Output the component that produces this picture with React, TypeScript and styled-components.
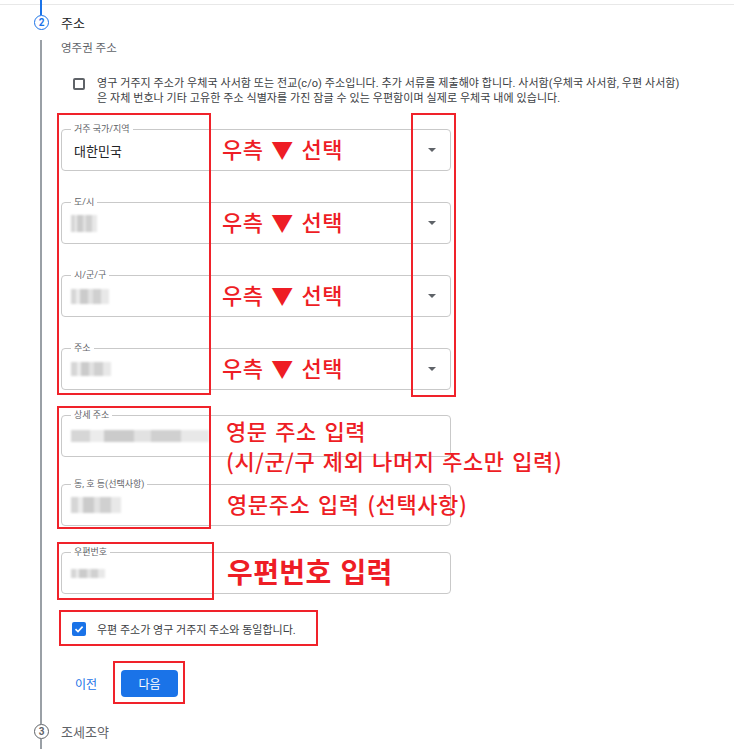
import React, { FC } from 'react';
import styled, { createGlobalStyle } from 'styled-components';

const GlobalStyle = createGlobalStyle`
    body {
        margin: 0;
        background: #fff;
        font-family: Roboto, "Noto Sans CJK KR", sans-serif;
        color: #202124;
    }
`;

const Page = styled.div`
    position: relative;
    width: 734px;
    height: 749px;
    overflow: hidden;
    background: linear-gradient(#e8e8e8, #e8e8e8) 0 4px / 100% 1px no-repeat, #fff;
`;

const Connector = styled.div`
    margin-left: 40px;
    height: 15px;
    border-left: 2px solid #1a73e8;
`;

const StepHead = styled.div`
    display: flex;
    align-items: center;
    height: 15px;
`;

const Circle = styled.div<{ active?: boolean }>`
    box-sizing: border-box;
    margin-left: 34px;
    width: 15px;
    height: 15px;
    border-radius: 50%;
    border: 1.5px solid ${props => props.active ? "#1a73e8" : "#5f6368"};
    color: ${props => props.active ? "#1a73e8" : "#5f6368"};
    font-size: 10px;
    font-weight: 700;
    display: flex;
    align-items: center;
    justify-content: center;
`;

const StepTitle = styled.div<{ muted?: boolean }>`
    margin-left: 12px;
    font-size: 13px;
    color: ${props => props.muted ? "#5f6368" : "#202124"};
`;

const StepBody = styled.div<{ fill?: boolean }>`
    margin-left: 40px;
    border-left: 2px solid #9aa0a6;
    padding-left: 19px;
    padding-bottom: ${props => props.fill ? "0" : "27px"};
    height: ${props => props.fill ? "40px" : "auto"};
`;

const Subtitle = styled.div`
    margin-top: 10px;
    font-size: 11.5px;
    line-height: 16px;
    color: #5f6368;
`;

const CheckRow = styled.div`
    display: flex;
    align-items: flex-start;
    gap: 12px;
    margin-top: 20px;
    padding-left: 12px;
`;

const Box = styled.span`
    box-sizing: border-box;
    flex: none;
    width: 12px;
    height: 12px;
    margin-top: 2px;
    border: 2px solid #5f6368;
    border-radius: 2px;
`;

const CheckedBox = styled.span`
    flex: none;
    width: 14px;
    height: 14px;
    border-radius: 2px;
    background: #1a73e8;
    display: flex;
    align-items: center;
    justify-content: center;
`;

const CheckText = styled.div`
    font-size: 11px;
    line-height: 15px;
    letter-spacing: 0.08px;
    color: #3c4043;
    white-space: nowrap;
`;

const Line = styled.span`
    display: block;
`;

const Field = styled.div<{ gap: number }>`
    position: relative;
    box-sizing: border-box;
    width: 390px;
    height: 42px;
    margin-top: ${props => props.gap}px;
    border: 1px solid #c9c9c9;
    border-radius: 4px;
    display: flex;
    align-items: center;
    justify-content: space-between;
    padding: 0 14px 0 12px;
`;

const FieldLabel = styled.span`
    position: absolute;
    top: -7px;
    left: 9px;
    padding: 0 3px;
    background: #fff;
    font-size: 9px;
    line-height: 12px;
    color: #5f6368;
`;

const Value = styled.span`
    font-size: 13px;
    color: #202124;
`;

const Smudge = styled.span<{ w: number; h: number }>`
    display: block;
    margin-left: -3px;
    width: ${props => props.w}px;
    height: ${props => props.h}px;
    background: linear-gradient(90deg, #d6d6d6 0 14%, #ececec 14% 24%, #cbcbcb 24% 46%, #e2e2e2 46% 58%, #d0d0d0 58% 80%, #e8e8e8 80%);
    filter: blur(1.2px);
`;

const Caret = styled.span`
    width: 0;
    height: 0;
    border-left: 4px solid transparent;
    border-right: 4px solid transparent;
    border-top: 4px solid #5f6368;
`;

const Note = styled.div<{ size: number; left: number; top?: number; bold?: boolean }>`
    position: absolute;
    left: ${props => props.left}px;
    top: ${props => props.top !== undefined ? `${props.top}px` : "50%"};
    transform: ${props => props.top !== undefined ? "none" : "translateY(-58%)"};
    font-family: "Noto Sans CJK KR", sans-serif;
    font-size: ${props => props.size}px;
    line-height: 30px;
    font-weight: ${props => props.bold ? 700 : 500};
    letter-spacing: ${props => props.bold ? "0.4px" : "0.6px"};
    word-spacing: 2px;
    color: #ee1d25;
    white-space: nowrap;
`;

const SameRow = styled.div`
    display: flex;
    align-items: center;
    gap: 11px;
    margin-top: 27px;
    padding-left: 11px;
    font-size: 11px;
    color: #3c4043;
`;

const Actions = styled.div`
    display: flex;
    align-items: center;
    gap: 24px;
    margin-top: 33px;
    padding-left: 14px;
`;

const TextButton = styled.span`
    font-size: 12px;
    color: #1a73e8;
`;

const PrimaryButton = styled.button`
    width: 57px;
    height: 27px;
    border: none;
    border-radius: 4px;
    background: #1a73e8;
    color: #fff;
    font-family: inherit;
    font-size: 12px;
`;

const Mark = styled.div`
    position: absolute;
    box-sizing: border-box;
    border: 2px solid #f0222a;
    pointer-events: none;
`;

interface ISelectProps {
    label: string;
    gap: number;
    value?: string;
    blur?: [number, number];
}

const SelectField: FC<ISelectProps> = ({ label, gap, value, blur }) => (
    <Field gap={gap}>
        <FieldLabel>{label}</FieldLabel>
        {value ? <Value>{value}</Value> : <Smudge w={blur![0]} h={blur![1]} />}
        <Caret />
        <Note size={22} left={160}>우측 ▼ 선택</Note>
    </Field>
);

const marks = [
    { left: 57, top: 113, width: 154, height: 282 },
    { left: 411, top: 113, width: 45, height: 284 },
    { left: 57, top: 406, width: 154, height: 123 },
    { left: 57, top: 542, width: 157, height: 58 },
    { left: 59, top: 610, width: 259, height: 36 },
    { left: 113, top: 661, width: 72, height: 43 },
];

const App: FC = () => (
    <Page>
        <GlobalStyle />
        <Connector />
        <StepHead>
            <Circle active>2</Circle>
            <StepTitle>주소</StepTitle>
        </StepHead>
        <StepBody>
            <Subtitle>영주권 주소</Subtitle>
            <CheckRow>
                <Box />
                <CheckText>
                    <Line>영구 거주지 주소가 우체국 사서함 또는 전교(c/o) 주소입니다. 추가 서류를 제출해야 합니다. 사서함(우체국 사서함, 우편 사서함)</Line>
                    <Line>은 자체 번호나 기타 고유한 주소 식별자를 가진 잠글 수 있는 우편함이며 실제로 우체국 내에 있습니다.</Line>
                </CheckText>
            </CheckRow>

            <SelectField label="거주 국가/지역" gap={23} value="대한민국" />
            <SelectField label="도/시" gap={31} blur={[26, 17]} />
            <SelectField label="시/군/구" gap={31} blur={[38, 15]} />
            <SelectField label="주소" gap={31} blur={[40, 14]} />

            <Field gap={25}>
                <FieldLabel>상세 주소</FieldLabel>
                <Smudge w={138} h={12} />
                <Note size={22} left={164} top={-1}>
                    영문 주소 입력<br />(시/군/구 제외 나머지 주소만 입력)
                </Note>
            </Field>
            <Field gap={27}>
                <FieldLabel>동, 호 등(선택사항)</FieldLabel>
                <Smudge w={50} h={16} />
                <Note size={22} left={165}>영문주소 입력 (선택사항)</Note>
            </Field>
            <Field gap={26}>
                <FieldLabel>우편번호</FieldLabel>
                <Smudge w={34} h={9} />
                <Note size={28} left={165} bold>우편번호 입력</Note>
            </Field>

            <SameRow>
                <CheckedBox>
                    <svg width="10" height="10" viewBox="0 0 10 10">
                        <path d="M1.5 5.2 L4 7.6 L8.6 2.6" fill="none" stroke="#fff" strokeWidth="1.6" />
                    </svg>
                </CheckedBox>
                우편 주소가 영구 거주지 주소와 동일합니다.
            </SameRow>

            <Actions>
                <TextButton>이전</TextButton>
                <PrimaryButton>다음</PrimaryButton>
            </Actions>
        </StepBody>
        <StepHead>
            <Circle>3</Circle>
            <StepTitle muted>조세조약</StepTitle>
        </StepHead>
        <StepBody fill />

        {marks.map((m, i) => (
            <Mark key={i} style={{ left: m.left, top: m.top, width: m.width, height: m.height }} />
        ))}
    </Page>
);

export default App;
